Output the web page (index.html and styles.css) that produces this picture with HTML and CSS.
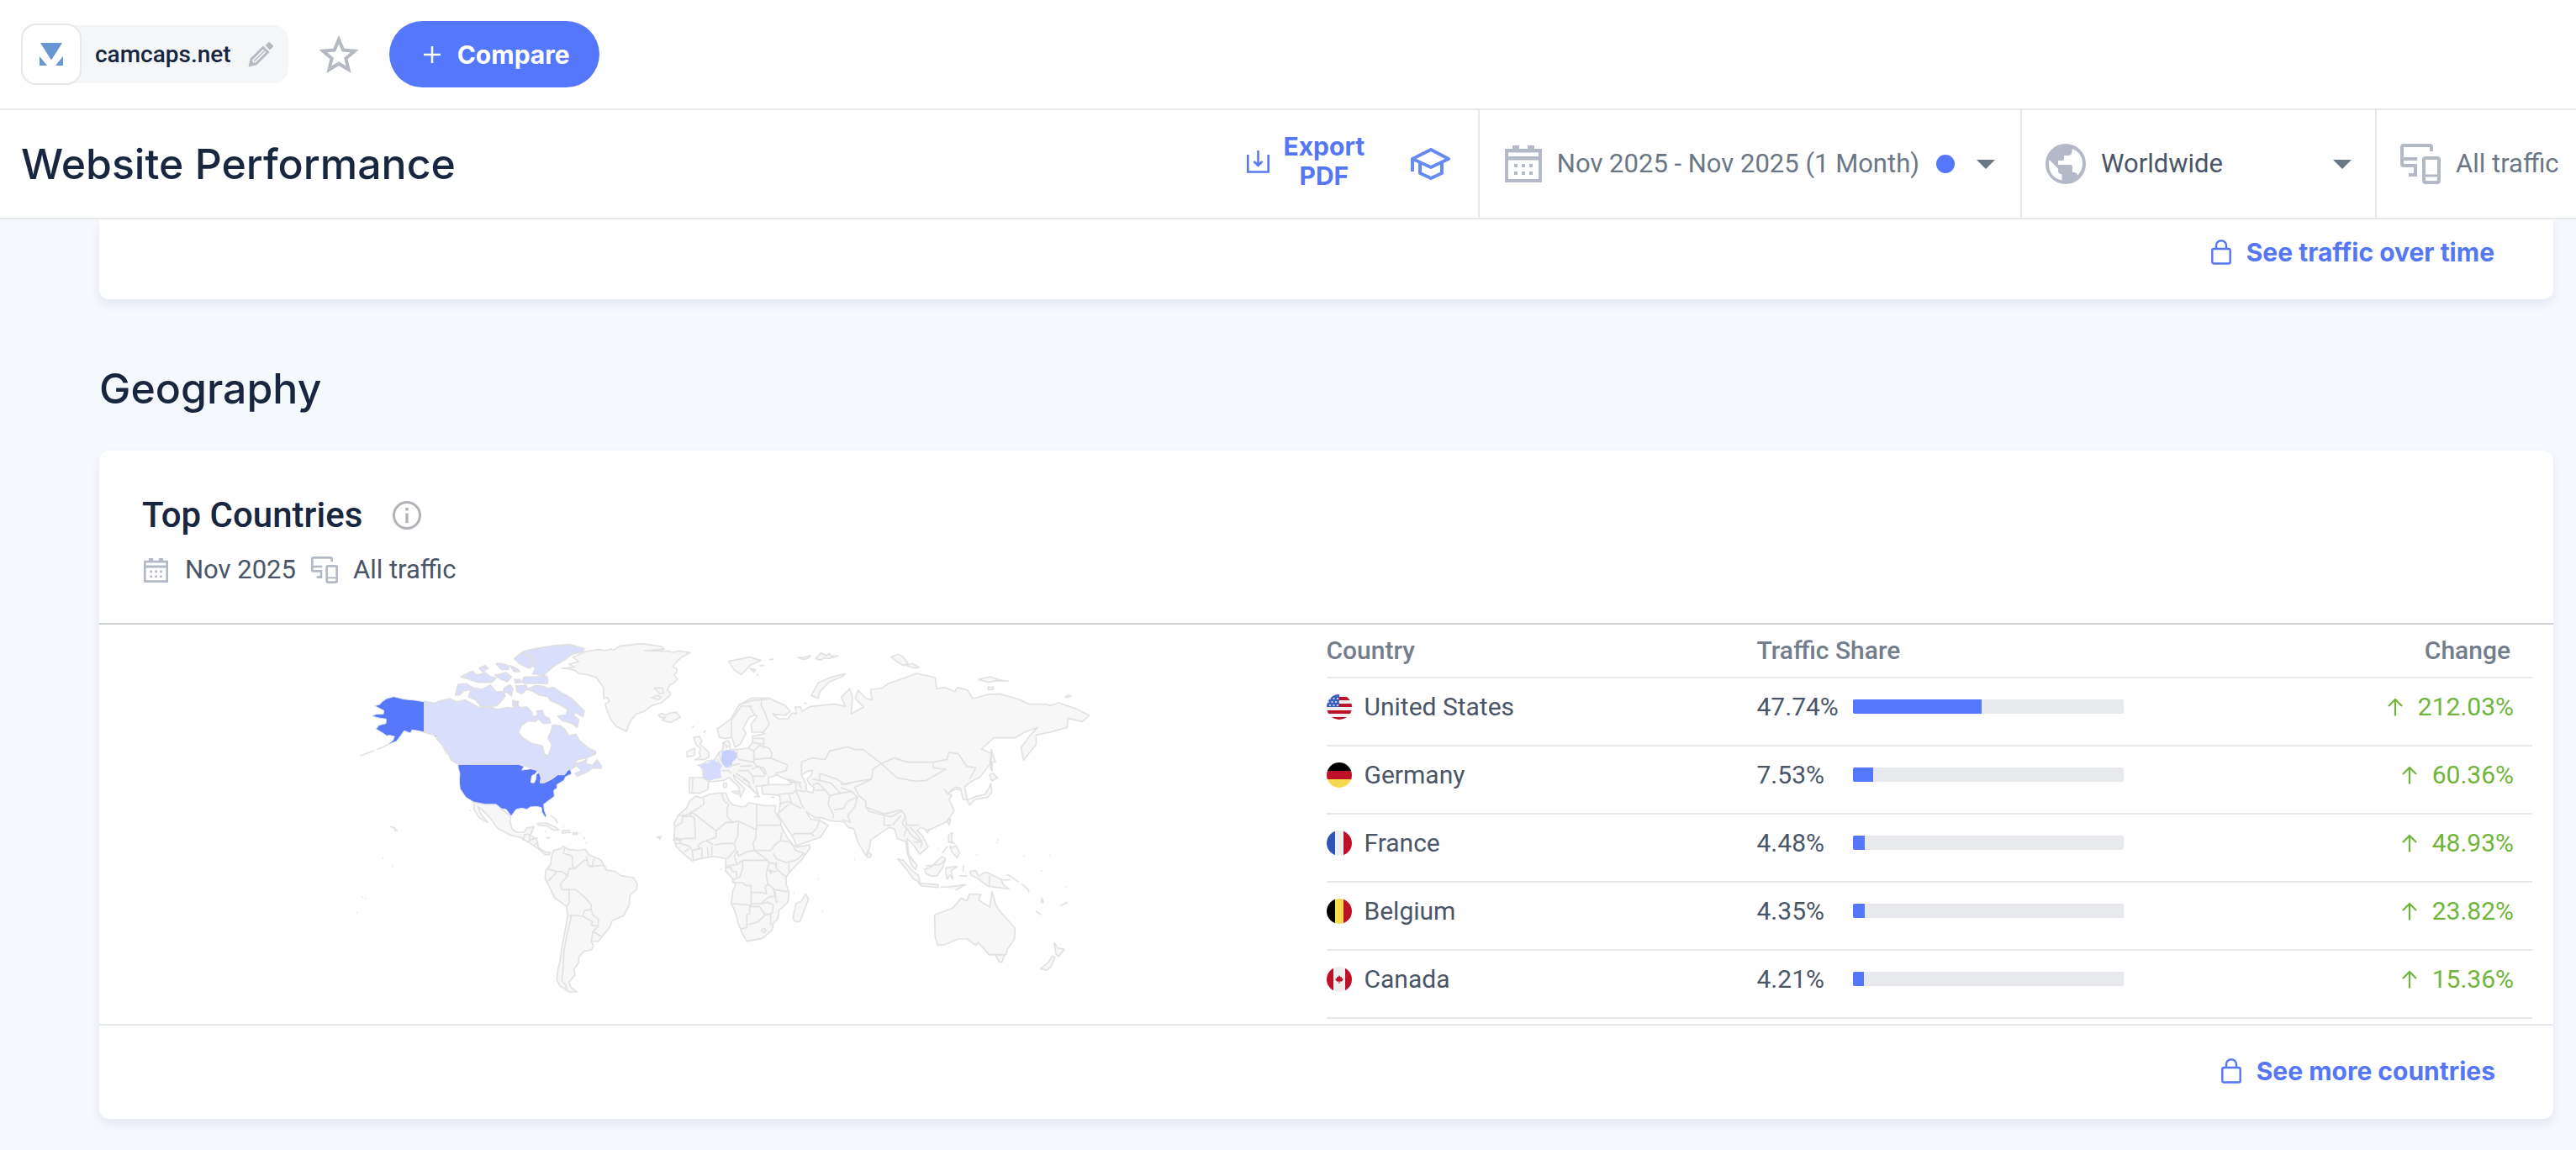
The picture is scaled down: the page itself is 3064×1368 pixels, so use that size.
FILE: index.html
```html
<!DOCTYPE html>
<html lang="en">
<head>
<meta charset="utf-8">
<title>Website Performance</title>
<meta name="viewport" content="width=device-width, initial-scale=1">
<link rel="stylesheet" href="styles.css">
</head>
<body>
<svg class="defs" aria-hidden="true">
  <symbol id="i-cal" viewBox="0 0 44 44"><path fill="currentColor" fill-rule="evenodd" d="M9 0h8v4h10V0h8v4h9v40H0V4h9zM4 8.500v4.500h36V8.500zM4 17.500V40h36V17.500z"/><path fill="currentColor" d="M11 22h4v4h-4zM20 22h4v4h-4zM29 22h4v4h-4zM11 31h4v4h-4zM20 31h4v4h-4zM29 31h4v4h-4z"/></symbol>
  <symbol id="i-dev" viewBox="0 0 48 48"><path fill="none" stroke="currentColor" stroke-width="4" d="M37 9V4q0-2-2-2H4Q2 2 2 4v12q0 2 2 2h16M4 26h14v11h-8M2 18v6q0 2 2 2"/><rect x="28" y="17" width="18" height="29" rx="2" fill="none" stroke="currentColor" stroke-width="4"/><path stroke="currentColor" stroke-width="3" d="M28 38h18"/></symbol>
  <symbol id="i-lock" viewBox="0 0 24 30"><path fill="none" stroke="currentColor" stroke-width="2.400" d="M6 11V7a6 5.700 0 0 1 12 0v4"/><rect x="1.300" y="11" width="21.400" height="17.500" rx="2" fill="none" stroke="currentColor" stroke-width="2.400"/></symbol>
  <symbol id="i-up" viewBox="0 0 18 22"><path fill="none" stroke="currentColor" stroke-width="2.200" d="M9 21.500V2M1 10l8-8 8 8"/></symbol>
  <symbol id="i-caret" viewBox="0 0 22 11"><path fill="#6b7785" d="M0 0h22L11 11z"/></symbol>
  <clipPath id="disc"><circle cx="15" cy="15" r="15"/></clipPath>
</svg>

<header>
  <div class="sitebar">
    <div class="site">
      <span class="site-logo"><svg width="28" height="28" viewBox="0 0 28 28" aria-hidden="true"><path fill="#6796d2" d="M1 0h26L15 19q-1 2-2 0zM0 16l9 11H0zM28 16l-9 11h9z"/></svg></span>
      <span class="site-name">camcaps.net</span>
      <button class="icon-btn" aria-label="Edit site"><svg width="30" height="30" viewBox="0 0 30 30" aria-hidden="true"><path fill="none" stroke="#b5bac2" stroke-width="3" d="M2.500 27.500l1.500-7L18 6.500l5.500 5.500L9.500 26z"/><path fill="#b5bac2" d="M20.500 4L24 .5q1-1 2 0L29.500 4q1 1 0 2L26 9.500zM1 29l2-8 6 6z"/><path stroke="#b5bac2" stroke-width="1.500" d="M7 23L20 10"/></svg></button>
    </div>
    <button class="icon-btn star" aria-label="Add to favourites"><svg width="46" height="46" viewBox="0 0 46 46" aria-hidden="true"><path fill="none" stroke="#b5bac2" stroke-width="4" d="M23 5l5.200 12.600 13.600 1.100-10.400 8.800 3.200 13.300L23 33.700l-11.600 7.100 3.200-13.300L4.200 18.700l13.600-1.100z"/></svg></button>
    <button class="compare"><svg width="20" height="20" viewBox="0 0 20 20" aria-hidden="true"><path stroke="#fff" stroke-width="2.500" d="M10 0v20M0 10h20"/></svg>Compare</button>
  </div>

  <div class="toolbar">
    <h1>Website Performance</h1>
    <button class="export"><svg width="27" height="27" viewBox="0 0 27 27" aria-hidden="true"><path fill="none" stroke="#5779f2" stroke-width="2.600" d="M1.300 5v20.500h24.400V5M13.500 0v18M8.500 13l5 5 5-5"/></svg><span>Export PDF</span></button>
    <button class="icon-btn learn" aria-label="Learn"><svg width="47" height="38" viewBox="0 0 47 38" aria-hidden="true"><path fill="none" stroke="#668bf0" stroke-width="4" stroke-linejoin="round" d="M2 28V13L24 2l21 11-21 10L2 13M11 18v12l13 6 13-6V18"/></svg></button>
    <button class="filter date"><svg class="filter-icon" width="44" height="44" aria-hidden="true"><use href="#i-cal"/></svg><span>Nov 2025 - Nov 2025 (1 Month)</span><i class="dot"></i><svg width="22" height="11" aria-hidden="true"><use href="#i-caret"/></svg></button>
    <label class="filter region"><svg class="filter-icon" width="48" height="48" viewBox="0 0 48 48" aria-hidden="true"><circle cx="24" cy="24" r="24" fill="currentColor"/><path fill="#fff" d="M4.500 19L15 29.500V32q0 4 4.500 4.500v7Q4 40 4 24zM32 6q12 5 12 18 0 7-5.500 13.500-1.500-3.500-4.500-3.500h-2v-7q0-2-2.500-2H15v-5h4.500q2.500 0 2.500-2.500V14h4.500q5 0 5-5z"/></svg>
      <select aria-label="Region"><option>Worldwide</option></select><svg width="22" height="11" aria-hidden="true"><use href="#i-caret"/></svg></label>
    <label class="filter traffic"><svg class="filter-icon" width="48" height="48" aria-hidden="true"><use href="#i-dev"/></svg>
      <select aria-label="Traffic source"><option>All traffic</option></select></label>
  </div>
</header>

<main>
  <section class="card card-tail">
    <a class="more" href="#"><svg width="24" height="30" aria-hidden="true"><use href="#i-lock"/></svg>See traffic over time</a>
  </section>

  <h2>Geography</h2>

  <section class="card">
    <div class="card-head">
      <div class="card-title"><h3>Top Countries</h3><svg width="34" height="34" viewBox="0 0 34 34" aria-hidden="true"><circle cx="17" cy="17" r="15.500" fill="none" stroke="#b0b3b8" stroke-width="3"/><path fill="#b0b3b8" d="M15.300 8h3.400v3.400h-3.400zM15.300 14.500h3.400V26h-3.400z"/></svg></div>
      <div class="card-sub">
        <svg width="29" height="29" aria-hidden="true"><use href="#i-cal"/></svg><span>Nov 2025</span>
        <svg class="dev" width="32" height="32" aria-hidden="true"><use href="#i-dev"/></svg><span>All traffic</span>
      </div>
    </div>

    <div class="card-body">
      <div class="map">
        <svg class="world" viewBox="-66 9 2760 1401" role="img" aria-label="World map of traffic share">
          <!-- the Americas and the North Atlantic -->
          <g class="land">
            <path d="M775 165l45-4-20-11 35-9-20-16 45-20 45-7 25 4 20-6 10 4 25-15 75-8 70 10 10 10-70 5 85 2 17 4 20-5 40 6-32 18-20 20-10 12 15 8v12l-10 10 13 16-18 15-10 5-10 18 12 8-2 12-30 25-35 10-25 20-30 10-20 25-15 37-35-17-20-25-15-35-5-20 15-12-8-12-12 4-2-40-25-35-30-10-35-5-10-10-20-5zM1095 270l20-8 15 6-10 8zM1105 235l28 0 5 18-15 2z"/>
            <path d="M1120 330l15-4 8 6 20-8 20-2 15 18-35 18-30-8 12-10-20 0zM1240 372l6 3"/>
            <path d="M460 642l40 8h45l15 18 32 24-2 20 7 25 15 13h28l10-15 25-5-10 25-5 5 25 15 5 20 0 8 25 17 20 3-5 7-15 0-25-22-35-23-30-17-35-8-45-25-25-35-30-30-15-12 10 25 25 32-30-17-18-28zM637 780l5-22h18v22M655 785l12-10 22-5M675 798l15-15"/>
            <path d="M688 718l30-1 35 15 12 10-20 0-25-15-30-3zM775 745l25-3 5 8-28 3zM815 752h15v6h-15zM715 745l5 3M735 690l15 10 10 18M780 727h3M720 770h12M838 755h3M852 768l5 6M860 788h3"/>
            <path d="M780 800l-10 8-25 7-7 25-3 25-17 20-3 30 13 25 22 45 42 30 3 35-10 60-10 50-7 50-8 35-3 30 11 25 22 10 10 10h30l-22-15-8-20 22-25-4-20 17-25v-20l20-20 25-5 8-15-8-15h25l15-20 25-30 10-25 40-17 20-38 3-35 22-20 5-20-15-23-45-7-20-15-30-5-20-35-20-10-25-10-10-18-30 3-30-3z"/>
            <path d="M163 730l12 3 12 12-10-3M134 842h4M168 872h4M60 982h4M72 987h4M41 1037h4M1115 767l15-1-6 8zM446 672h4M55 477l50-18M115 455l40-18M325 415l25 20 12 35"/>
          </g>
          <g class="border">
            <path d="M785 805l-5 20 32 10v35l8 10-20 0-5 25-25 30 5 20 25 0 25 0 35 30 20 25v15l-25 5-5 20-40-5-10 5M720 880l35 10-5 10-25 25M755 890l20 0 20 15M820 880l10-8 25-22h10l-3-15M865 850l5 20 15 5v-20l8-13M870 870h30l25-2 10 17M800 955l2 45-10 15M880 1025l5 20 20 15v25l-25-3 5-12-35-20M905 1085l-20 20-5 35M885 1105l33 18M810 1045l-8 35-12 50-8 50-2 50-5 50 15 18v20"/>
          </g>
          <g class="canada">
            <path d="M284 283L320 290L345 280L375 273L400 285L430 278L460 295L480 305L520 303L545 312L580 305L600 308L612 290L625 305L650 303L668 322L672 342L690 330L685 318L705 315L712 335L730 345L735 360L710 362L690 345L680 355L655 352L630 370L620 395L635 412L665 432L705 442L712 470L725 478L735 455L740 438L725 415L735 395L742 368L770 370L785 382L800 405L825 400L835 420L852 435L870 450L895 462L895 470L860 486L832 490L815 508L845 500L865 490L858 505L885 512L900 492L915 510L915 522L885 520L865 535L830 550L822 540L845 530L828 512L808 525L800 524L785 545L755 548L720 565L710 572L700 570L697 540L690 530L665 520L640 512L620 508H405L380 492L362 455L342 430L325 405L284 393z"/>
            <path d="M395 260l10-38 30-2 30 20-40 5-15 15zM445 255l15-20 30 5 30-15 20 25 25-2 8 15-15 20-15 15-55 5-20-25-25-10zM570 235l20-12 10 15-5 25-15-12-15 0zM612 228l35-2 5 10-20 20-18-8zM650 240l30-13 30 3 15 8 20-5 30 20 35 20 20 20 25 25-5 20-25-15-10 10 20 15-5 28-20-15-35-10-15-15 30-5 5-20-35-20-25-10-10-15-30-5-25-15zM600 280l20 5-5 15-15 0zM415 195l40-20 20 15 25-10 20 15 20 5-15 15-50 0-30-10zM480 165l20-10 12 10-20 12zM540 148l20 0 25 8 0 12-25 2zM535 190l40-10 20 15-15 18-20-8zM590 155l25 12 10 10-20 0zM605 205h20l5 10-20 2zM640 197l80-4 5 12-2 14h-80l-10-5zM605 130l25-20 35 10 15 25-20 20-35-15zM635 105l45-10 60-10 60-5 55 15-5 10-40 10-25 20-35 20-25 20-15 15-40-5 10-20-20-20 15-15-30-15z"/>
          </g>
          <g class="usa">
            <path d="M107 299L125 294L135 283L150 273L175 266L210 275L250 279L284 284V393L262 388L240 385L235 396L212 388L200 405L185 425L153 438L172 422L178 408L160 404L150 406L135 395L112 382L122 368L147 362L148 346L120 342L97 335L112 329L138 328L140 316zM318 410l8-6 6 6zM405 508H620L640 515L632 528L665 524L688 530L680 542L668 548L664 572L676 574L682 560L684 542L694 538L700 556L697 574L712 574L740 560L760 545L785 545L795 530L805 524L809 542L788 552L782 565L757 580L758 592L746 600L748 622L710 650L712 672L719 690L716 698L704 678L702 662L685 658L662 660L650 668L632 664L612 668L594 692L576 668L560 666L540 650H500L460 642L432 625L412 595L409 570L411 540L405 520z"/>
          </g>

          <!-- Europe, Asia, Africa and Oceania -->
          <g transform="translate(1170 0)">
            <g class="land">
              <path d="M60 555h50l20 15-5 28-25 12H60zM85 620l15 8 30-13 35-5h25l10 27 15 15 35 8 15-5 5-10 30 5 30 5h38l-3 20 20 35 5 25 20 35 20 25 15 8 43-8 2 12-30 42-35 35-20 25v25l10 30-3 35-32 30-5 30-15 15-5 25-35 30-55 10-15-25-15-35-10-40-15-35 5-45 10-20-13-25-22-25v-45l-25-5-25-2-40 7-30 8-35-28-23-25-7-30 3-35-3-15 15-30 30-25 10-25z"/>
              <path d="M110 558l-5-40-15-8 15-2 20-13 25-3 15-27 15-10v-25l25 5v20h25l40-5 15-20v-22l45-10-10-5h-37l-3-27 22-30-8-5-22 10-20 40 10 15-20 40-20 10-10-35-25 5-20-5-7-30 47-35 30-50 45-25h60l60 27 18 20-18 15-45-5 20 17h35l15-22 15 5-5-25 20 0 5 15 30-17 60-6 30-2 35 8-15-33 30-30 10 30-5 60 45-25-30-30 10-30 30 30 20 5-5-25v-13l40-4 25-18 45-15 55-20 65 15 5 40 30-5 35 15 10-15 35 10 20 30 55-15 40-2 70 20 35 17 60 0 15 5 30-10 60 20 50 25-25 23-50-13-5 33-60 17-50 10v35l-45 55-8-45 33-45 25-27-45 17-35 20h-75l-45 40 35 15-5 40-35 45-30 15-25 20 10 45h-15l-10-40-20-5-25 25-10-15 5 10 20 10-10 15 18 40-28 40-65 30-25-10-15 10 20 20 20 40-30 25-20-30-25-25 5 55 30 40-5 15-15-15-15-45-5-40-30-10-10-35-20-5-65 45-5 30-12 25-28-45-15-50-20-5-15-20-45-3-35-12h-25l-30-22 15 27 35 5 8 5 20 13-28 42-85 30-10-25-55-85 8-40-3-30-60-5-5-30 30-3h75l0-10-50-25-30 10v25l-20 5-25 0 10 35-25-25-20-15-45-35 5 15 35 35-15 30-5-35-35-35-20 10-45 5z"/>
              <path d="M75 412l20-4 10 17-7 10 32 30v15l-15 10-35 2 20-12-5-15 5-15-15-10zM52 462l28-12-2 25-26 6zM110 395l8-8M72 373h4M183 430l15-8 8 15-12 10zM182 575h10v15h-10zM212 605l22-2 0 12zM290 623h22M350 625h15"/>
              <path d="M200 140l50-10 25-5 40 12-35 15-15 15-20 20-25-15zM275 165l20 5-5 8zM345 133h15M310 155h18M300 188h6M495 262l25-45 45-20 50-12-5 8-50 20-35 35-5 25zM447 126h20l25-6-8 10-20 3zM510 130l20-20 20 10 10-8 5 10 25-2-30 10-20-2-10 8zM780 125l25-10 20 12 15 20-15 8-25-15zM835 155l20-8 25 15-20 2zM1092 205l40-10 30 10 35 6-40-2-30 6zM1125 232l20 0 0 8-18 2zM1400 266l12-6 10 4-12 5zM470 290h8M1162 775v4M1157 788l3-2"/>
              <path d="M432 1045l8-40 20-10 15-25 10 18-30 80-15 2-10-12zM695 818l14 12-4 10-10 0zM1137 455l15 45-12 0 0 30-6-8 4-35zM1130 545l15-5 15 15-20 12zM1135 577l5 28-15 20-45 8-20 20-10-18 30-12 35-8 15-25zM980 710l12-8-5 22zM903 745l12-5-5 12zM985 760l12-8-2 30 10 8-20-5zM990 800l10 5 10-8 14 25-8 20-18-20zM962 825l20-25M803 845l20 5 30 35 25 20 5 25-25-15-25-35zM878 932l70 5 0 10-60-5zM955 945l30 0 60-8-35 20M900 882l25-10 35-35 14 8-10 30-20 30-20 2-20-10zM975 895l0-18 40-5-20 15 5 30-10-15-10 15zM1037 868v22M1022 905l30 2M1062 890l20-3 10 20 25-15 55 25 8 20 20 15-45-5-30-5-40-30-20-8zM1190 900l20 10 25 18M1245 935l20 15 8 15M1170 920l35 0M1318 985l5 15-8 0zM1295 1030l20 15M1385 1012l25-12M1403 945h4M1252 835h4M1345 833h4M1315 888h4M1083 830h4M432 967h4M518 916h4M533 1030h4M647 846h4M170 882h4M965 777h3M949 807h3"/>
              <path d="M935 1045l65-25 30-35 20 10 10-25 40 2-8 20 40 25 8-55 12 45 20 30 50 55-2 40-25 35-5 20-60 0-40-45-8 12-30-23-35 0-45 20-25 3-10-30zM1152 1188l32 0-8 25-10 0zM1362 1145l12 18 24 5-20 25-10-8zM1365 1195l-15 35-15 12-22-5 30-25 12-20z"/>
            </g>
            <g class="de"><path d="M176 462l22-6 22 4 12 12-4 14-16 14 2 16-24 4-16-20z"/></g>
            <g class="fr"><path d="M90 510h16l4-8 14 2 22-14 10 8 22 12-8 16 4 30-26 4-14 6-26-10 2-30z"/></g>
            <g class="border">
              <path d="M110 628l2 22-37 25-30 15-25 0M65 675v17l-30 3v20l-25 15M65 692l13 8 4 72H45l-15 3-20-5M65 675l90 70 35-30 25 0M175 612l10 28 15 10-5 15v30l20 20 20-5 63 30M300 652v88M300 725h88M235 715l-3 50-12 25h-40l-30 5M155 745v23l-35 12M298 740l-1 30-10 20 5 25-27 5-30 15-5-20M220 790l5 20-30 35M230 815l-10 20 10 30-35 5M230 865l20-15h90l-20-15-28-20h58l15-20 20-15 5-30M385 780l35 5 20 30 30 10-30 25-35 8-35-13-10-20M415 860v35M370 855v25l35 30M250 850v30l-10 30-25 10v10h35l10 10h20v25h40l15 5-5-25 10-10-5-25v-20l10-30-5-8M345 890h25M340 935l25 20 45 7M280 965v45l-65-5M280 1005h35l30-25h20l-5-30M365 960l5 40 8-5M275 1010v30l-10 5v45l-20 5M275 1015h35l20 30-25 25-35 10M315 1005l25-5 20 10-5 30-25 5M350 1045v35h10M316 1100l10-8 8 8-8 8zM105 805v40M124 805l4 38M140 800v38M70 815l5 38M8 790l20 0 32 10 10 15 30-7-10-8 15-15 15-5 25 15M40 820l18-10M5 775l25 5-3 10M188 875h20l5 15 15 0v20M345 860l15 0 10 10M340 885l10 0 0 15M0 780l10-10 15 5"/>
              <path d="M210 410v-60l35-50h40M275 300l20 35M320 275l-5 20 15 30 15 40-22 28M235 295l50-15 55-5M230 455v25l5 10 55 10v-40l-20-10M290 460l20-20 35 10 10 20-5 15-60 5M350 485l60 25-5 20-40 10M290 500l10 15 25 5 10 25M285 430l35 5M285 415h40v35M280 525l30-10 20 30M235 530h35l15 20h45M285 550l5 25M240 515l45-3M225 540l35 20 15 15M200 515l40-10M72 558l-2 47M175 530h25l10 10M160 490l12 20M165 465l8 30M250 560l20 10 10 25M415 570l25 5v25l-10 10-55 5M440 600l20 50 10 18M440 600l35 5M505 600h40l15 20-5 30 20 40-5 12M560 620l40-10 40-5 20 20-35 15-15 25-35 5M660 625l-10 35-25 30 10 25-30-10M380 650l30-10 50 25M380 680l35-30M425 765l10-10h60l20-20 10-35M495 755l10 10M460 545v-45l35-15 50 5 15-30 65-15 25 10h30l65 50-30 20-5 35-60 10-35 10-30-20-60-20v25l-25-5M745 505l45-20 50 15h90v20l45 5-70 40-40 3-65-13zM930 500l50-10 5-25 35 5 30 45 32 5-22 40M710 560l-60 30 15 30 25 20v20l65 25 60-15 15 20 5 35h45M690 660l10 15 55 15 25 5 35-20M755 695v30h25M785 725l30-35M830 690l-10 30 15 15-10 30M835 735l20 30 35 20M845 730l25 25 20 30-5 20M600 580l50-10M525 565l40 10 35 35M545 600l-25-25-20 5M600 590l40 15M410 560l50 15M450 575l10 20M360 615l20 5M415 610l10 40M985 610l25-15 15 5M860 785h25M845 840l15 15M1130 905v42M905 870l50-5 15-15"/>
              <path class="sea" d="M460 545l20-12 20-5-5 18-15 14 8 18 17 12-5 20-22-8-2-25z"/>
            </g>
          </g>
        </svg>
      </div>

      <table>
        <thead><tr><th class="c-name">Country</th><th class="c-share">Traffic Share</th><th class="c-change">Change</th></tr></thead>
        <tbody>
          <tr><td><div class="country"><svg width="30" height="30" viewBox="0 0 30 30" aria-hidden="true"><g clip-path="url(#disc)"><path fill="#efefef" d="M0 0h30v30H0z"/><path fill="#bd1128" d="M15 3h15v4H15zM15 11h15v4H0v0h15zM0 19h30v4H0zM0 27h30v3H0z"/><path fill="#3a5fc0" d="M0 0h15v15H0z"/><path stroke="#efefef" stroke-width="1.500" stroke-dasharray="2 2.500" d="M3 5h12M1 9h14M3 13h12"/></g></svg>United States</div></td><td><div class="share"><span>47.74%</span><div class="bar"><i style="width:47.74%"></i></div></div></td><td><div class="change"><svg width="18" height="22" aria-hidden="true"><use href="#i-up"/></svg>212.03%</div></td></tr>
          <tr><td><div class="country"><svg width="30" height="30" viewBox="0 0 30 30" aria-hidden="true"><g clip-path="url(#disc)"><path d="M0 0h30v10H0z"/><path fill="#bd1128" d="M0 10h30v10H0z"/><path fill="#f7d94f" d="M0 20h30v10H0z"/></g></svg>Germany</div></td><td><div class="share"><span>7.53%</span><div class="bar"><i style="width:7.53%"></i></div></div></td><td><div class="change"><svg width="18" height="22" aria-hidden="true"><use href="#i-up"/></svg>60.36%</div></td></tr>
          <tr><td><div class="country"><svg width="30" height="30" viewBox="0 0 30 30" aria-hidden="true"><g clip-path="url(#disc)"><path fill="#2f55b5" d="M0 0h10v30H0z"/><path fill="#efefef" d="M10 0h10v30H10z"/><path fill="#bd1128" d="M20 0h10v30H20z"/></g></svg>France</div></td><td><div class="share"><span>4.48%</span><div class="bar"><i style="width:4.48%"></i></div></div></td><td><div class="change"><svg width="18" height="22" aria-hidden="true"><use href="#i-up"/></svg>48.93%</div></td></tr>
          <tr><td><div class="country"><svg width="30" height="30" viewBox="0 0 30 30" aria-hidden="true"><g clip-path="url(#disc)"><path d="M0 0h10v30H0z"/><path fill="#f7d94f" d="M10 0h10v30H10z"/><path fill="#bd1128" d="M20 0h10v30H20z"/></g></svg>Belgium</div></td><td><div class="share"><span>4.35%</span><div class="bar"><i style="width:4.35%"></i></div></div></td><td><div class="change"><svg width="18" height="22" aria-hidden="true"><use href="#i-up"/></svg>23.82%</div></td></tr>
          <tr><td><div class="country"><svg width="30" height="30" viewBox="0 0 30 30" aria-hidden="true"><g clip-path="url(#disc)"><path fill="#efefef" d="M0 0h30v30H0z"/><path fill="#bd1128" d="M0 0h8v30H0zM22 0h8v30h-8zM15 10l1.500 2.500 1.500-.5v2l2 .5-2 3h-2.500V20h-1v-2.500H12l-2-3 2-.5v-2l1.500.5z"/></g></svg>Canada</div></td><td><div class="share"><span>4.21%</span><div class="bar"><i style="width:4.21%"></i></div></div></td><td><div class="change"><svg width="18" height="22" aria-hidden="true"><use href="#i-up"/></svg>15.36%</div></td></tr>
        </tbody>
      </table>
    </div>

    <div class="card-foot">
      <a class="more" href="#"><svg width="24" height="30" aria-hidden="true"><use href="#i-lock"/></svg>See more countries</a>
    </div>
  </section>
</main>
</body>
</html>
```
FILE: styles.css
```css
* { box-sizing: border-box; }
body {
  margin: 0;
  background: #f5f8fd;
  color: #4a5568;
  font: 400 31px/40px Roboto, "Liberation Sans", sans-serif;
  overflow-x: hidden;
}
svg { display: block; flex: none; }
.defs { position: absolute; width: 0; height: 0; }
h1, h2, h3 { margin: 0; color: #182640; }
h1, h2 { font: 500 50px/60px Inter, sans-serif; }
button, select {
  margin: 0;
  padding: 0;
  border: 0;
  background: none;
  color: inherit;
  font: inherit;
}
header { background: #fff; }

.sitebar {
  display: flex;
  align-items: center;
  height: 131px;
  padding: 0 25px;
  border-bottom: 2px solid #e6e8ea;
}
.site {
  display: flex;
  align-items: center;
  height: 69px;
  padding-right: 18px;
  border-radius: 18px;
  background: #f5f6f8;
}
.site-logo {
  display: grid;
  place-items: center;
  width: 72px;
  height: 73px;
  border: 2px solid #e6e8ea;
  border-radius: 18px;
  background: #fff;
}
.site-name {
  margin: 0 20px 0 16px;
  color: #182640;
  font-size: 28px;
  font-weight: 500;
}
.star { margin: 0 37px; }
.compare {
  display: flex;
  align-items: center;
  gap: 20px;
  height: 79px;
  padding: 0 35px 0 41px;
  border-radius: 40px;
  background: #5577fb;
  color: #fff;
  font: 700 30px/40px Inter, sans-serif;
}

.toolbar {
  display: flex;
  height: 130px;
  padding-left: 25px;
  border-bottom: 2px solid #e6e8ea;
}
.toolbar h1 { flex: 1; align-self: center; }
.export {
  display: flex;
  align-items: center;
  gap: 16px;
  padding-bottom: 6px;
  color: #5577f5;
  font: 700 30px/35px Inter, sans-serif;
}
.export span { width: 98px; }
.learn { margin: 0 33px 0 54px; }
.filter {
  display: flex;
  align-items: center;
  border-left: 2px solid #e6e8ea;
  color: #6b7785;
  white-space: nowrap;
}
.filter-icon { margin-right: 18px; color: #b3b9c6; }
.date { padding: 0 30px; }
.dot {
  width: 22px;
  height: 22px;
  margin: 0 26px 0 20px;
  border-radius: 50%;
  background: #5577fb;
}
.region { width: 422px; padding: 0 28px; color: #4a5568; }
.region select { flex: 1; }
.traffic { padding: 0 20px 0 28px; }
select { appearance: none; }

main { padding: 0 27px 37px 118px; }
.card {
  border-radius: 12px;
  background: #fff;
  box-shadow: 0 6px 12px rgba(40, 40, 100, 0.08);
}
.card-tail {
  padding: 19px 70px 36px;
  border-radius: 0 0 12px 12px;
}
.more {
  display: flex;
  align-items: center;
  justify-content: flex-end;
  gap: 18px;
  color: #5577f5;
  font: 700 30px/40px Inter, sans-serif;
  text-decoration: none;
}
main h2 { margin: 76px 0 44px; }
.card-head {
  padding: 51px 51px 43px;
  border-bottom: 2px solid #ccd0d2;
}
.card-title { display: flex; align-items: center; gap: 36px; }
h3 { font-size: 42px; font-weight: 500; line-height: 52px; }
.card-sub {
  display: flex;
  align-items: center;
  margin-top: 19px;
}
.card-sub svg { margin: 0 20px 0 2px; color: #b3b9c6; }
.card-sub .dev { margin: 0 18px; }

.card-body {
  display: grid;
  grid-template-columns: 1fr 1fr;
  padding-bottom: 6px;
}
.map { display: grid; justify-content: center; }
.world { width: 920px; max-width: 100%; }
.land path { fill: #f7f7f7; stroke: #e2e2e2; stroke-width: 5; stroke-linejoin: round; }
.border path { fill: none; stroke: #e2e2e2; stroke-width: 5; stroke-linejoin: round; }
.border .sea { fill: #fff; }
.canada path { fill: #dadefd; stroke: #dfdfe3; stroke-width: 5; stroke-linejoin: round; }
.usa path { fill: #5878fb; stroke: #e2e5f0; stroke-width: 3; stroke-linejoin: round; }
.fr path { fill: #d6dbfe; }
.de path { fill: #c8cefd; }

table {
  width: calc(100% - 25px);
  border-collapse: separate;
  border-spacing: 0;
  table-layout: fixed;
}
th, td { padding: 0; text-align: left; border-bottom: 2px solid #e6e8ea; font-size: 30px; }
th { height: 64px; color: #737d8b; font-weight: 500; }
td { height: 81px; padding-bottom: 12px; }
.c-name { width: 512px; }
.c-change { padding-right: 26px; text-align: right; }
.country { display: flex; align-items: center; gap: 15px; }
.share { display: flex; align-items: center; }
.share span { width: 114px; }
.bar {
  width: 322px;
  height: 17px;
  border-radius: 2px;
  background: #e7e9ec;
  overflow: hidden;
}
.bar i { display: block; height: 100%; background: #5577fb; }
.change {
  display: flex;
  align-items: center;
  justify-content: flex-end;
  gap: 18px;
  padding-right: 22px;
  color: #6fb53a;
}
.card-foot {
  padding: 34px 69px 37px;
  border-top: 2px solid #e6e8ea;
}
```
